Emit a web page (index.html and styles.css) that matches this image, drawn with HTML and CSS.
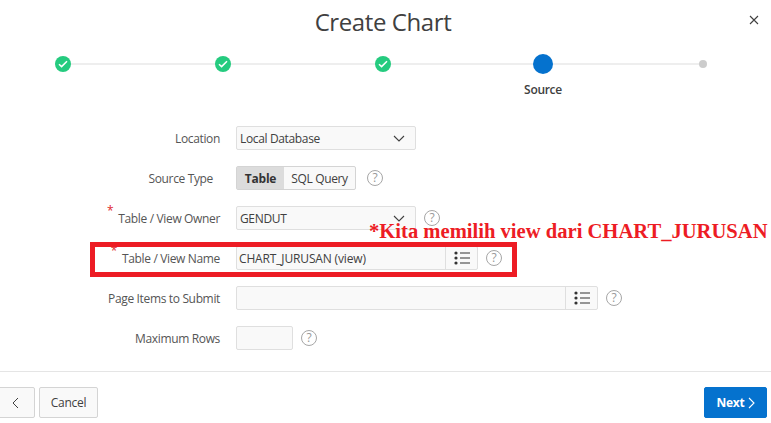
FILE: index.html
```html
<!DOCTYPE html>
<html lang="en">
<head>
<meta charset="utf-8">
<title>Create Chart</title>
<link rel="stylesheet" href="styles.css">
</head>
<body>
<div class="dialog">
  <header class="header">
    <h1 class="title">Create Chart</h1>
    <button class="close" aria-label="Close"><svg width="10" height="10" viewBox="0 0 10 10"><path d="M1 1l8 8M9 1l-8 8" stroke="#404040" stroke-width="1.1" fill="none"/></svg></button>
  </header>

  <ol class="stepper">
    <li class="step"><span class="node"><span class="dot done"><svg width="10" height="8" viewBox="0 0 10 8"><path d="M1 4.2l2.6 2.4L9 1.3" stroke="#fff" stroke-width="1.5" fill="none"/></svg></span></span></li>
    <li class="step"><span class="node"><span class="dot done"><svg width="10" height="8" viewBox="0 0 10 8"><path d="M1 4.2l2.6 2.4L9 1.3" stroke="#fff" stroke-width="1.5" fill="none"/></svg></span></span></li>
    <li class="step"><span class="node"><span class="dot done"><svg width="10" height="8" viewBox="0 0 10 8"><path d="M1 4.2l2.6 2.4L9 1.3" stroke="#fff" stroke-width="1.5" fill="none"/></svg></span></span></li>
    <li class="step"><span class="node"><span class="dot current"></span></span><span class="step-label">Source</span></li>
    <li class="step"><span class="node"><span class="dot todo"></span></span></li>
  </ol>

  <form class="form">
    <div class="row">
      <label class="label">Location</label>
      <div class="field w-select"><span class="value">Local Database</span><svg class="chev" width="12" height="7" viewBox="0 0 12 7"><path d="M1 1l5 5 5-5" stroke="#404040" stroke-width="1.1" fill="none"/></svg></div>
    </div>
    <div class="row">
      <label class="label label-inset">Source Type</label>
      <div class="toggle"><span class="opt on">Table</span><span class="opt">SQL Query</span></div>
      <span class="help">?</span>
    </div>
    <div class="row">
      <label class="label"><span class="req">*</span>Table / View Owner</label>
      <div class="field w-select"><span class="value">GENDUT</span><svg class="chev" width="12" height="7" viewBox="0 0 12 7"><path d="M1 1l5 5 5-5" stroke="#404040" stroke-width="1.1" fill="none"/></svg></div>
      <span class="help">?</span>
    </div>
    <div class="row">
      <label class="label"><span class="req">*</span>Table / View Name</label>
      <div class="field w-name"><span class="value value-wide">CHART_JURUSAN (view)</span><span class="lov"><svg width="16" height="14" viewBox="0 0 16 14"><circle cx="2" cy="2" r="1.6" fill="#333"/><circle cx="2" cy="7" r="1.6" fill="#333"/><circle cx="2" cy="12" r="1.6" fill="#333"/><path d="M6 2h10M6 7h10M6 12h10" stroke="#333" stroke-width="1.1"/></svg></span></div>
      <span class="help">?</span>
    </div>
    <div class="row">
      <label class="label">Page Items to Submit</label>
      <div class="field w-items"><span class="value"></span><span class="lov"><svg width="16" height="14" viewBox="0 0 16 14"><circle cx="2" cy="2" r="1.6" fill="#333"/><circle cx="2" cy="7" r="1.6" fill="#333"/><circle cx="2" cy="12" r="1.6" fill="#333"/><path d="M6 2h10M6 7h10M6 12h10" stroke="#333" stroke-width="1.1"/></svg></span></div>
      <span class="help">?</span>
    </div>
    <div class="row">
      <label class="label">Maximum Rows</label>
      <div class="field w-rows"></div>
      <span class="help">?</span>
    </div>
  </form>

  <footer class="footer">
    <button class="btn prev" aria-label="Previous"><svg width="7" height="12" viewBox="0 0 7 12"><path d="M6 1L1 6l5 5" stroke="#404040" stroke-width="1" fill="none"/></svg></button>
    <button class="btn cancel">Cancel</button>
    <button class="btn next">Next<svg width="7" height="12" viewBox="0 0 7 12"><path d="M1 1l5 5-5 5" stroke="#fff" stroke-width="1.1" fill="none"/></svg></button>
  </footer>

  <div class="mark-box"></div>
  <div class="mark-note">*Kita memilih view dari CHART_JURUSAN</div>
</div>
</body>
</html>
```
FILE: styles.css
```css
* { box-sizing: border-box; }
html, body { margin: 0; padding: 0; background: #fff; }
body { width: 771px; height: 423px; overflow: hidden; font-family: "Open Sans", "Noto Sans", sans-serif; font-size: 12px; color: #404040; }
.dialog { position: relative; width: 771px; height: 423px; }

.header { height: 44px; display: grid; grid-template-columns: 1fr auto 1fr; align-items: center; }
.title { grid-column: 2; margin: 0 5px 0 0; font-size: 24px; font-weight: 500; letter-spacing: -0.4px; color: #404040; line-height: 44px; }
.close { grid-column: 3; justify-self: end; margin: -4px 12px 0 0; padding: 0; border: 0; background: none; display: flex; }

.stepper { list-style: none; margin: 10px 0 0 -17px; padding: 0; height: 64px; display: flex; }
.step { position: relative; flex: none; width: 160px; display: flex; flex-direction: column; align-items: center; }
.step:not(:last-child)::after { content: ""; position: absolute; left: 80px; top: 9px; width: 160px; height: 2px; background: #eee; }
.node { position: relative; z-index: 1; height: 20px; display: flex; align-items: center; justify-content: center; }
.dot { display: flex; align-items: center; justify-content: center; border-radius: 50%; }
.done { width: 16px; height: 16px; background: #25cb7f; }
.current { width: 20px; height: 20px; background: #0572ce; }
.todo { width: 8px; height: 8px; background: #ccc; }
.step-label { margin-top: 8px; font-size: 12px; font-weight: 600; letter-spacing: -0.3px; line-height: 16px; }

.row { height: 40px; display: flex; align-items: center; }
.label { width: 220px; margin-right: 16px; padding-top: 2px; text-align: right; color: #555; letter-spacing: -0.35px; line-height: 16px; flex: none; }
.label-inset { padding-right: 7px; }
.req { display: inline-block; color: #e0262b; vertical-align: 8px; line-height: 0; margin-right: 5px; }

.field { height: 24px; display: flex; align-items: center; background: #f9f9f9; border: 1px solid #dfdfdf; border-radius: 2px; flex: none; }
.value { flex: 1; padding-left: 3px; letter-spacing: -0.35px; color: #404040; white-space: nowrap; }
.value-wide { padding-left: 2px; letter-spacing: -0.15px; }
.chev { margin-right: 10px; }
.w-select { width: 180px; }
.w-name { width: 242px; }
.w-items { width: 362px; }
.w-rows { width: 57px; }
.lov { width: 32px; height: 100%; display: flex; align-items: center; justify-content: center; border-left: 1px solid #dfdfdf; }

.toggle { height: 24px; display: flex; border: 1px solid #d4d4d4; border-radius: 2px; background: #f9f9f9; flex: none; }
.opt { display: flex; align-items: center; justify-content: center; width: 71px; letter-spacing: -0.35px; }
.opt.on { width: 47px; background: #dcdcdc; font-weight: 700; letter-spacing: -0.2px; color: #333; }

.help { width: 16px; height: 16px; margin-left: 8px; flex: none; display: flex; align-items: center; justify-content: center; border: 1.3px solid #a6a6a6; border-radius: 50%; color: #999; font-size: 12px; line-height: 1; font-weight: 400; }
.toggle + .help { margin-left: 11px; }

.footer { margin: 13px 0 0 -4px; padding: 15px 4px 0 0; border-top: 1px solid #e5e5e5; display: flex; gap: 4px; }
.btn { height: 31px; padding: 0; display: flex; align-items: center; justify-content: center; font: inherit; background: #f9f9f9; border: 1px solid #d4d4d4; border-radius: 2px; color: #404040; letter-spacing: -0.3px; }
.prev { width: 39px; }
.cancel { width: 59px; }
.next { width: 63px; margin-left: auto; gap: 3px; background: #0572ce; border-color: #0572ce; color: #fff; font-weight: 700; letter-spacing: -0.2px; }

.mark-box { position: absolute; left: 90px; top: 242px; width: 427px; height: 35px; border: 5px solid #ed1c24; }
.mark-note { position: absolute; left: 369px; top: 220px; font-family: "Liberation Serif", serif; font-weight: 700; font-size: 20.6px; line-height: 23px; color: #ed1c24; white-space: nowrap; }
```
